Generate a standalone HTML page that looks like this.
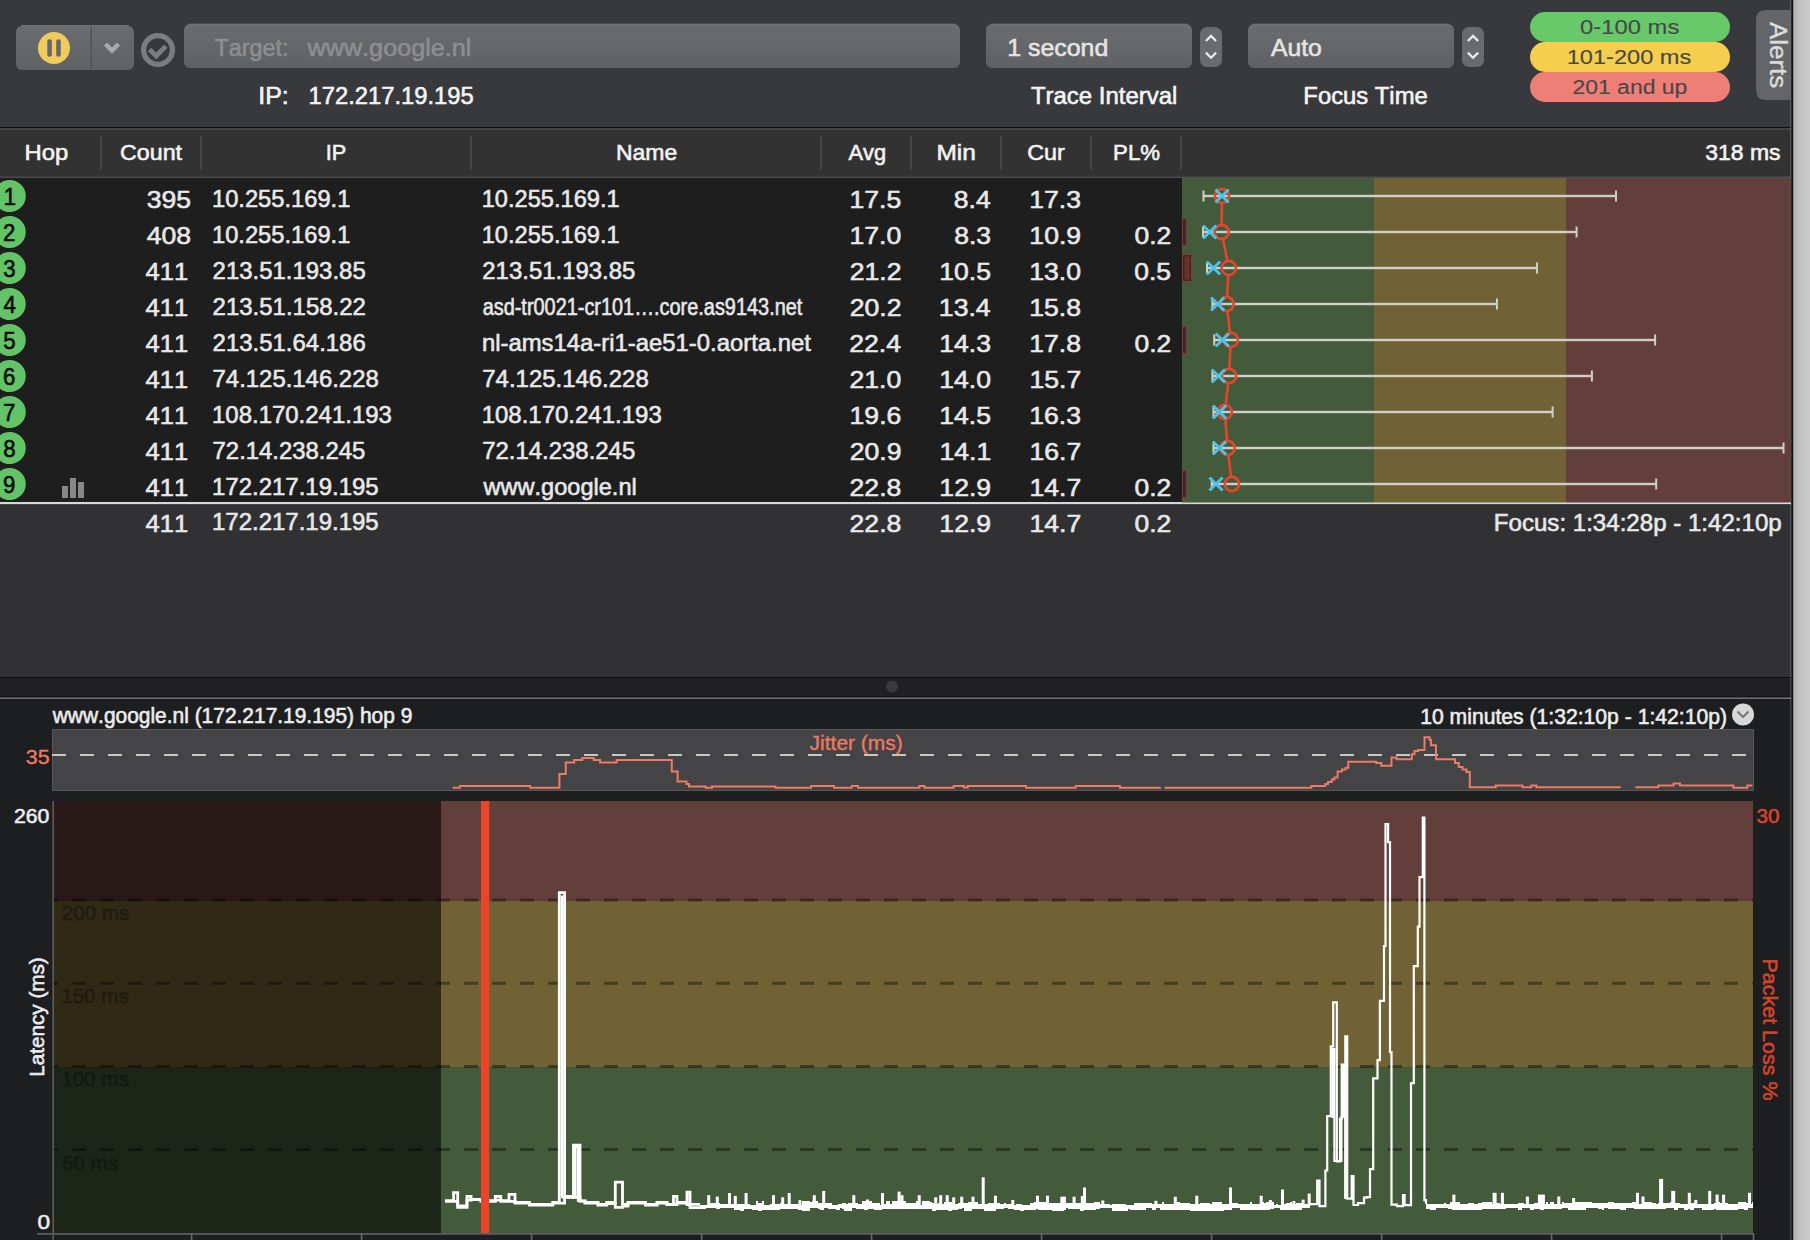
<!DOCTYPE html>
<html><head><meta charset="utf-8"><title>PingPlotter</title>
<style>
html,body{margin:0;padding:0;background:#38393c;}
body{width:1810px;height:1240px;overflow:hidden;}
svg{display:block;font-family:"Liberation Sans",sans-serif;font-kerning:none;}
text{white-space:pre;}
</style></head><body>
<svg width="1810" height="1240" viewBox="0 0 1810 1240">
<rect x="0" y="0" width="1810" height="127" fill="#38393c"/>
<rect x="0" y="127" width="1791" height="1.5" fill="#0e0e10"/>
<rect x="0" y="128.3" width="1791" height="1.5" fill="#515153"/>
<rect x="0" y="129.8" width="1791" height="46.7" fill="#323233"/>
<rect x="0" y="176.5" width="1791" height="1.5" fill="#4a4a4c"/>
<rect x="0" y="178" width="1791" height="325" fill="#1e1e1f"/>
<rect x="0" y="502" width="1791" height="2.2" fill="#d8d8d8"/>
<rect x="0" y="504.5" width="1791" height="172.5" fill="#313133"/>
<rect x="0" y="677" width="1791" height="1.5" fill="#0e0e10"/>
<rect x="0" y="678.5" width="1791" height="18" fill="#202022"/>
<circle cx="892" cy="686.5" r="6" fill="#3a3a3c"/>
<rect x="0" y="696.3" width="1791" height="1.2" fill="#0e0e10"/>
<rect x="0" y="697.5" width="1791" height="1.5" fill="#6e6e70"/>
<rect x="0" y="699" width="1791" height="541" fill="#1d1e20"/>
<defs><linearGradient id="rs" x1="0" x2="1" y1="0" y2="0"><stop offset="0" stop-color="#b0b0b0"/><stop offset="0.4" stop-color="#c2c2c2"/><stop offset="1" stop-color="#cbcbcb"/></linearGradient><linearGradient id="btn" x1="0" x2="0" y1="0" y2="1"><stop offset="0" stop-color="#6b6c6f"/><stop offset="1" stop-color="#606164"/></linearGradient></defs>
<rect x="1790" y="0" width="1.5" height="1240" fill="#fff" fill-opacity="0.16"/>
<rect x="1791.5" y="0" width="1.8" height="1240" fill="#111"/>
<rect x="1793.3" y="0" width="17" height="1240" fill="url(#rs)"/>
<rect x="16" y="26" width="118" height="44" rx="6" fill="url(#btn)"/>
<rect x="90.5" y="26" width="1.3" height="44" fill="#505154"/>
<circle cx="54" cy="48" r="16" fill="#eecb5c"/>
<rect x="47.3" y="39.2" width="4.6" height="17.6" rx="2.3" fill="#66676a"/>
<rect x="56.2" y="39.2" width="4.6" height="17.6" rx="2.3" fill="#66676a"/>
<path d="M104,45.6 L107,42.4 L112,47.4 L117,42.4 L120,45.6 L112,53.8 Z" fill="#ababab"/>
<circle cx="158" cy="50" r="14.4" fill="none" stroke="#7c7c7e" stroke-width="5.3"/>
<polyline points="149.6,49.6 156.3,56 165.8,46.2" fill="none" stroke="#7c7c7e" stroke-width="4.8"/>
<rect x="184" y="24" width="776" height="44" rx="6" fill="url(#btn)"/>
<text x="214.48" y="55.60" font-size="23.95" textLength="73.96" lengthAdjust="spacingAndGlyphs" fill="#8d8e90" stroke="#8d8e90" stroke-width="0.6" >Target:</text>
<text x="307.54" y="55.60" font-size="24.56" textLength="163.85" lengthAdjust="spacingAndGlyphs" fill="#8d8e90" stroke="#8d8e90" stroke-width="0.6" >www.google.nl</text>
<text x="258.19" y="103.60" font-size="24.39" textLength="30.59" lengthAdjust="spacingAndGlyphs" fill="#f4f4f4" stroke="#f4f4f4" stroke-width="0.6" >IP:</text>
<text x="308.49" y="103.60" font-size="24.39" textLength="165.21" lengthAdjust="spacingAndGlyphs" fill="#f4f4f4" stroke="#f4f4f4" stroke-width="0.6" >172.217.19.195</text>
<rect x="986" y="24" width="206" height="44" rx="6" fill="url(#btn)"/>
<text x="1007.20" y="55.70" font-size="24.10" textLength="101.10" lengthAdjust="spacingAndGlyphs" fill="#e4e4e4" stroke="#e4e4e4" stroke-width="0.6" >1 second</text>
<rect x="1200" y="27" width="22" height="40" rx="7" fill="#6a6b6e"/>
<polyline points="1205.9,41 1211,35.9 1216.1,41" fill="none" stroke="#ececec" stroke-width="2.2"/>
<polyline points="1205.9,52.6 1211,57.7 1216.1,52.6" fill="none" stroke="#ececec" stroke-width="2.2"/>
<text x="1030.96" y="103.70" font-size="24.39" textLength="146.34" lengthAdjust="spacingAndGlyphs" fill="#f4f4f4" stroke="#f4f4f4" stroke-width="0.6" >Trace Interval</text>
<rect x="1248" y="24" width="206" height="44" rx="6" fill="url(#btn)"/>
<text x="1271.05" y="55.70" font-size="24.10" textLength="50.68" lengthAdjust="spacingAndGlyphs" fill="#e4e4e4" stroke="#e4e4e4" stroke-width="0.6" >Auto</text>
<rect x="1462" y="27" width="22" height="40" rx="7" fill="#6a6b6e"/>
<polyline points="1467.9,41 1473,35.9 1478.1,41" fill="none" stroke="#ececec" stroke-width="2.2"/>
<polyline points="1467.9,52.6 1473,57.7 1478.1,52.6" fill="none" stroke="#ececec" stroke-width="2.2"/>
<text x="1303.35" y="103.70" font-size="24.39" textLength="124.41" lengthAdjust="spacingAndGlyphs" fill="#f4f4f4" stroke="#f4f4f4" stroke-width="0.6" >Focus Time</text>
<rect x="21" y="25" width="108" height="1" fill="#7b7c7f" fill-opacity="0.8"/>
<rect x="189" y="23.6" width="766" height="1" fill="#7b7c7f" fill-opacity="0.8"/>
<rect x="991" y="23.6" width="196" height="1" fill="#7b7c7f" fill-opacity="0.8"/>
<rect x="1253" y="23.6" width="196" height="1" fill="#7b7c7f" fill-opacity="0.8"/>
<rect x="1530" y="72" width="200" height="30" rx="15" fill="#ee7e76"/>
<rect x="1530" y="42" width="200" height="30" rx="15" fill="#f4ce4c"/>
<rect x="1530" y="12" width="200" height="30" rx="15" fill="#67c96a"/>
<text x="1580.13" y="33.70" font-size="20.52" textLength="99.17" lengthAdjust="spacingAndGlyphs" fill="#474747" stroke="#474747" stroke-width="0.12" >0-100 ms</text>
<text x="1566.76" y="63.60" font-size="20.52" textLength="124.53" lengthAdjust="spacingAndGlyphs" fill="#474747" stroke="#474747" stroke-width="0.12" >101-200 ms</text>
<text x="1572.40" y="93.50" font-size="20.52" textLength="115.00" lengthAdjust="spacingAndGlyphs" fill="#474747" stroke="#474747" stroke-width="0.12" >201 and up</text>
<path d="M1791,10 L1766,10 Q1756,10 1756,20 L1756,90 Q1756,100 1766,100 L1791,100 Z" fill="#646568"/>
<g transform="translate(1770,21.8) rotate(90)">
<text x="0.15" y="0.00" font-size="23.58" textLength="66.29" lengthAdjust="spacingAndGlyphs" fill="#dcdcdc" stroke="#dcdcdc" stroke-width="0.4" >Alerts</text>
</g>
<rect x="100.3" y="136.5" width="1.4" height="33" fill="#505052"/>
<rect x="200.3" y="136.5" width="1.4" height="33" fill="#505052"/>
<rect x="470.3" y="136.5" width="1.4" height="33" fill="#505052"/>
<rect x="820.3" y="136.5" width="1.4" height="33" fill="#505052"/>
<rect x="910.3" y="136.5" width="1.4" height="33" fill="#505052"/>
<rect x="1000.3" y="136.5" width="1.4" height="33" fill="#505052"/>
<rect x="1090.3" y="136.5" width="1.4" height="33" fill="#505052"/>
<rect x="1180.3" y="136.5" width="1.4" height="33" fill="#505052"/>
<text x="24.54" y="160.20" font-size="22.94" textLength="43.76" lengthAdjust="spacingAndGlyphs" fill="#f2f2f2" stroke="#f2f2f2" stroke-width="0.6" >Hop</text>
<text x="120.12" y="160.20" font-size="22.94" textLength="61.95" lengthAdjust="spacingAndGlyphs" fill="#f2f2f2" stroke="#f2f2f2" stroke-width="0.6" >Count</text>
<text x="325.79" y="160.20" font-size="22.94" textLength="20.55" lengthAdjust="spacingAndGlyphs" fill="#f2f2f2" stroke="#f2f2f2" stroke-width="0.6" >IP</text>
<text x="615.91" y="160.20" font-size="22.94" textLength="61.31" lengthAdjust="spacingAndGlyphs" fill="#f2f2f2" stroke="#f2f2f2" stroke-width="0.6" >Name</text>
<text x="848.46" y="160.20" font-size="22.94" textLength="37.65" lengthAdjust="spacingAndGlyphs" fill="#f2f2f2" stroke="#f2f2f2" stroke-width="0.6" >Avg</text>
<text x="936.49" y="160.20" font-size="22.94" textLength="39.39" lengthAdjust="spacingAndGlyphs" fill="#f2f2f2" stroke="#f2f2f2" stroke-width="0.6" >Min</text>
<text x="1027.32" y="160.20" font-size="22.94" textLength="37.47" lengthAdjust="spacingAndGlyphs" fill="#f2f2f2" stroke="#f2f2f2" stroke-width="0.6" >Cur</text>
<text x="1113.08" y="160.20" font-size="22.94" textLength="46.91" lengthAdjust="spacingAndGlyphs" fill="#f2f2f2" stroke="#f2f2f2" stroke-width="0.6" >PL%</text>
<text x="1705.23" y="160.20" font-size="22.94" textLength="75.30" lengthAdjust="spacingAndGlyphs" fill="#f2f2f2" stroke="#f2f2f2" stroke-width="0.6" >318 ms</text>
<rect x="1182" y="178" width="192" height="324.5" fill="#435b3b"/>
<rect x="1374" y="178" width="192" height="324.5" fill="#706234"/>
<rect x="1566" y="178" width="225" height="324.5" fill="#633f3c"/>
<circle cx="9.8" cy="196" r="16" fill="#62c466"/>
<text x="3.81" y="205.00" font-size="23.55" textLength="12.32" lengthAdjust="spacingAndGlyphs" fill="#0a0a0a" stroke="#0a0a0a" stroke-width="0.6" >1</text>
<text x="146.71" y="207.90" font-size="24.71" textLength="44.31" lengthAdjust="spacingAndGlyphs" fill="#e8e8e8" stroke="#e8e8e8" stroke-width="0.6" >395</text>
<text x="211.99" y="206.60" font-size="24.10" textLength="138.36" lengthAdjust="spacingAndGlyphs" fill="#e8e8e8" stroke="#e8e8e8" stroke-width="0.6" >10.255.169.1</text>
<text x="481.70" y="206.60" font-size="24.10" textLength="137.95" lengthAdjust="spacingAndGlyphs" fill="#e8e8e8" stroke="#e8e8e8" stroke-width="0.6" >10.255.169.1</text>
<text x="849.54" y="207.90" font-size="24.71" textLength="51.78" lengthAdjust="spacingAndGlyphs" fill="#e8e8e8" stroke="#e8e8e8" stroke-width="0.6" >17.5</text>
<text x="953.87" y="207.90" font-size="24.71" textLength="36.81" lengthAdjust="spacingAndGlyphs" fill="#e8e8e8" stroke="#e8e8e8" stroke-width="0.6" >8.4</text>
<text x="1029.29" y="207.90" font-size="24.71" textLength="51.78" lengthAdjust="spacingAndGlyphs" fill="#e8e8e8" stroke="#e8e8e8" stroke-width="0.6" >17.3</text>
<circle cx="9.8" cy="232" r="16" fill="#62c466"/>
<text x="2.98" y="241.00" font-size="23.55" textLength="12.36" lengthAdjust="spacingAndGlyphs" fill="#0a0a0a" stroke="#0a0a0a" stroke-width="0.6" >2</text>
<text x="146.74" y="243.90" font-size="24.71" textLength="44.31" lengthAdjust="spacingAndGlyphs" fill="#e8e8e8" stroke="#e8e8e8" stroke-width="0.6" >408</text>
<text x="211.99" y="242.60" font-size="24.10" textLength="138.36" lengthAdjust="spacingAndGlyphs" fill="#e8e8e8" stroke="#e8e8e8" stroke-width="0.6" >10.255.169.1</text>
<text x="481.70" y="242.60" font-size="24.10" textLength="137.95" lengthAdjust="spacingAndGlyphs" fill="#e8e8e8" stroke="#e8e8e8" stroke-width="0.6" >10.255.169.1</text>
<text x="849.46" y="243.90" font-size="24.71" textLength="51.78" lengthAdjust="spacingAndGlyphs" fill="#e8e8e8" stroke="#e8e8e8" stroke-width="0.6" >17.0</text>
<text x="954.26" y="243.90" font-size="24.71" textLength="36.80" lengthAdjust="spacingAndGlyphs" fill="#e8e8e8" stroke="#e8e8e8" stroke-width="0.6" >8.3</text>
<text x="1029.38" y="243.90" font-size="24.71" textLength="51.78" lengthAdjust="spacingAndGlyphs" fill="#e8e8e8" stroke="#e8e8e8" stroke-width="0.6" >10.9</text>
<text x="1134.43" y="243.90" font-size="24.71" textLength="36.80" lengthAdjust="spacingAndGlyphs" fill="#e8e8e8" stroke="#e8e8e8" stroke-width="0.6" >0.2</text>
<circle cx="9.8" cy="268" r="16" fill="#62c466"/>
<text x="3.25" y="277.00" font-size="23.55" textLength="12.39" lengthAdjust="spacingAndGlyphs" fill="#0a0a0a" stroke="#0a0a0a" stroke-width="0.6" >3</text>
<text x="145.51" y="279.90" font-size="24.10" textLength="42.63" lengthAdjust="spacingAndGlyphs" fill="#e8e8e8" stroke="#e8e8e8" stroke-width="0.6" >411</text>
<text x="212.60" y="278.60" font-size="24.10" textLength="153.11" lengthAdjust="spacingAndGlyphs" fill="#e8e8e8" stroke="#e8e8e8" stroke-width="0.6" >213.51.193.85</text>
<text x="482.30" y="278.60" font-size="24.10" textLength="153.11" lengthAdjust="spacingAndGlyphs" fill="#e8e8e8" stroke="#e8e8e8" stroke-width="0.6" >213.51.193.85</text>
<text x="849.75" y="279.90" font-size="24.71" textLength="51.79" lengthAdjust="spacingAndGlyphs" fill="#e8e8e8" stroke="#e8e8e8" stroke-width="0.6" >21.2</text>
<text x="939.24" y="279.90" font-size="24.71" textLength="51.78" lengthAdjust="spacingAndGlyphs" fill="#e8e8e8" stroke="#e8e8e8" stroke-width="0.6" >10.5</text>
<text x="1029.16" y="279.90" font-size="24.71" textLength="51.78" lengthAdjust="spacingAndGlyphs" fill="#e8e8e8" stroke="#e8e8e8" stroke-width="0.6" >13.0</text>
<text x="1134.21" y="279.90" font-size="24.71" textLength="36.80" lengthAdjust="spacingAndGlyphs" fill="#e8e8e8" stroke="#e8e8e8" stroke-width="0.6" >0.5</text>
<circle cx="9.8" cy="304" r="16" fill="#62c466"/>
<text x="3.59" y="313.00" font-size="23.55" textLength="12.43" lengthAdjust="spacingAndGlyphs" fill="#0a0a0a" stroke="#0a0a0a" stroke-width="0.6" >4</text>
<text x="145.51" y="315.90" font-size="24.10" textLength="42.63" lengthAdjust="spacingAndGlyphs" fill="#e8e8e8" stroke="#e8e8e8" stroke-width="0.6" >411</text>
<text x="212.59" y="314.60" font-size="24.10" textLength="153.31" lengthAdjust="spacingAndGlyphs" fill="#e8e8e8" stroke="#e8e8e8" stroke-width="0.6" >213.51.158.22</text>
<text x="482.65" y="314.60" font-size="24.10" textLength="319.69" lengthAdjust="spacingAndGlyphs" fill="#e8e8e8" stroke="#e8e8e8" stroke-width="0.6" >asd-tr0021-cr101….core.as9143.net</text>
<text x="849.75" y="315.90" font-size="24.71" textLength="51.79" lengthAdjust="spacingAndGlyphs" fill="#e8e8e8" stroke="#e8e8e8" stroke-width="0.6" >20.2</text>
<text x="938.89" y="315.90" font-size="24.71" textLength="51.79" lengthAdjust="spacingAndGlyphs" fill="#e8e8e8" stroke="#e8e8e8" stroke-width="0.6" >13.4</text>
<text x="1029.27" y="315.90" font-size="24.71" textLength="51.78" lengthAdjust="spacingAndGlyphs" fill="#e8e8e8" stroke="#e8e8e8" stroke-width="0.6" >15.8</text>
<circle cx="9.8" cy="340" r="16" fill="#62c466"/>
<text x="3.21" y="349.00" font-size="23.55" textLength="12.39" lengthAdjust="spacingAndGlyphs" fill="#0a0a0a" stroke="#0a0a0a" stroke-width="0.6" >5</text>
<text x="145.51" y="351.90" font-size="24.10" textLength="42.63" lengthAdjust="spacingAndGlyphs" fill="#e8e8e8" stroke="#e8e8e8" stroke-width="0.6" >411</text>
<text x="212.60" y="350.60" font-size="24.10" textLength="153.16" lengthAdjust="spacingAndGlyphs" fill="#e8e8e8" stroke="#e8e8e8" stroke-width="0.6" >213.51.64.186</text>
<text x="481.92" y="350.60" font-size="24.10" textLength="328.96" lengthAdjust="spacingAndGlyphs" fill="#e8e8e8" stroke="#e8e8e8" stroke-width="0.6" >nl-ams14a-ri1-ae51-0.aorta.net</text>
<text x="849.18" y="351.90" font-size="24.71" textLength="51.79" lengthAdjust="spacingAndGlyphs" fill="#e8e8e8" stroke="#e8e8e8" stroke-width="0.6" >22.4</text>
<text x="939.29" y="351.90" font-size="24.71" textLength="51.78" lengthAdjust="spacingAndGlyphs" fill="#e8e8e8" stroke="#e8e8e8" stroke-width="0.6" >14.3</text>
<text x="1029.27" y="351.90" font-size="24.71" textLength="51.78" lengthAdjust="spacingAndGlyphs" fill="#e8e8e8" stroke="#e8e8e8" stroke-width="0.6" >17.8</text>
<text x="1134.43" y="351.90" font-size="24.71" textLength="36.80" lengthAdjust="spacingAndGlyphs" fill="#e8e8e8" stroke="#e8e8e8" stroke-width="0.6" >0.2</text>
<circle cx="9.8" cy="376" r="16" fill="#62c466"/>
<text x="2.97" y="385.00" font-size="23.55" textLength="12.37" lengthAdjust="spacingAndGlyphs" fill="#0a0a0a" stroke="#0a0a0a" stroke-width="0.6" >6</text>
<text x="145.51" y="387.90" font-size="24.10" textLength="42.63" lengthAdjust="spacingAndGlyphs" fill="#e8e8e8" stroke="#e8e8e8" stroke-width="0.6" >411</text>
<text x="212.57" y="386.60" font-size="24.10" textLength="166.16" lengthAdjust="spacingAndGlyphs" fill="#e8e8e8" stroke="#e8e8e8" stroke-width="0.6" >74.125.146.228</text>
<text x="482.27" y="386.60" font-size="24.10" textLength="166.47" lengthAdjust="spacingAndGlyphs" fill="#e8e8e8" stroke="#e8e8e8" stroke-width="0.6" >74.125.146.228</text>
<text x="849.45" y="387.90" font-size="24.71" textLength="51.79" lengthAdjust="spacingAndGlyphs" fill="#e8e8e8" stroke="#e8e8e8" stroke-width="0.6" >21.0</text>
<text x="939.16" y="387.90" font-size="24.71" textLength="51.78" lengthAdjust="spacingAndGlyphs" fill="#e8e8e8" stroke="#e8e8e8" stroke-width="0.6" >14.0</text>
<text x="1029.46" y="387.90" font-size="24.71" textLength="51.78" lengthAdjust="spacingAndGlyphs" fill="#e8e8e8" stroke="#e8e8e8" stroke-width="0.6" >15.7</text>
<circle cx="9.8" cy="412" r="16" fill="#62c466"/>
<text x="2.96" y="421.00" font-size="23.55" textLength="12.36" lengthAdjust="spacingAndGlyphs" fill="#0a0a0a" stroke="#0a0a0a" stroke-width="0.6" >7</text>
<text x="145.51" y="423.90" font-size="24.10" textLength="42.63" lengthAdjust="spacingAndGlyphs" fill="#e8e8e8" stroke="#e8e8e8" stroke-width="0.6" >411</text>
<text x="211.97" y="422.60" font-size="24.10" textLength="179.98" lengthAdjust="spacingAndGlyphs" fill="#e8e8e8" stroke="#e8e8e8" stroke-width="0.6" >108.170.241.193</text>
<text x="481.67" y="422.60" font-size="24.10" textLength="180.08" lengthAdjust="spacingAndGlyphs" fill="#e8e8e8" stroke="#e8e8e8" stroke-width="0.6" >108.170.241.193</text>
<text x="849.59" y="423.90" font-size="24.71" textLength="51.78" lengthAdjust="spacingAndGlyphs" fill="#e8e8e8" stroke="#e8e8e8" stroke-width="0.6" >19.6</text>
<text x="939.24" y="423.90" font-size="24.71" textLength="51.78" lengthAdjust="spacingAndGlyphs" fill="#e8e8e8" stroke="#e8e8e8" stroke-width="0.6" >14.5</text>
<text x="1029.29" y="423.90" font-size="24.71" textLength="51.78" lengthAdjust="spacingAndGlyphs" fill="#e8e8e8" stroke="#e8e8e8" stroke-width="0.6" >16.3</text>
<circle cx="9.8" cy="448" r="16" fill="#62c466"/>
<text x="3.13" y="457.00" font-size="23.55" textLength="12.38" lengthAdjust="spacingAndGlyphs" fill="#0a0a0a" stroke="#0a0a0a" stroke-width="0.6" >8</text>
<text x="145.51" y="459.90" font-size="24.10" textLength="42.63" lengthAdjust="spacingAndGlyphs" fill="#e8e8e8" stroke="#e8e8e8" stroke-width="0.6" >411</text>
<text x="212.58" y="458.60" font-size="24.10" textLength="152.73" lengthAdjust="spacingAndGlyphs" fill="#e8e8e8" stroke="#e8e8e8" stroke-width="0.6" >72.14.238.245</text>
<text x="482.27" y="458.60" font-size="24.10" textLength="152.93" lengthAdjust="spacingAndGlyphs" fill="#e8e8e8" stroke="#e8e8e8" stroke-width="0.6" >72.14.238.245</text>
<text x="849.67" y="459.90" font-size="24.71" textLength="51.79" lengthAdjust="spacingAndGlyphs" fill="#e8e8e8" stroke="#e8e8e8" stroke-width="0.6" >20.9</text>
<text x="939.42" y="459.90" font-size="24.71" textLength="51.78" lengthAdjust="spacingAndGlyphs" fill="#e8e8e8" stroke="#e8e8e8" stroke-width="0.6" >14.1</text>
<text x="1029.46" y="459.90" font-size="24.71" textLength="51.78" lengthAdjust="spacingAndGlyphs" fill="#e8e8e8" stroke="#e8e8e8" stroke-width="0.6" >16.7</text>
<circle cx="9.8" cy="484" r="16" fill="#62c466"/>
<text x="3.06" y="493.00" font-size="23.55" textLength="12.37" lengthAdjust="spacingAndGlyphs" fill="#0a0a0a" stroke="#0a0a0a" stroke-width="0.6" >9</text>
<text x="145.51" y="495.90" font-size="24.10" textLength="42.63" lengthAdjust="spacingAndGlyphs" fill="#e8e8e8" stroke="#e8e8e8" stroke-width="0.6" >411</text>
<text x="211.97" y="494.60" font-size="24.10" textLength="166.73" lengthAdjust="spacingAndGlyphs" fill="#e8e8e8" stroke="#e8e8e8" stroke-width="0.6" >172.217.19.195</text>
<text x="483.53" y="494.60" font-size="24.10" textLength="153.24" lengthAdjust="spacingAndGlyphs" fill="#e8e8e8" stroke="#e8e8e8" stroke-width="0.6" >www.google.nl</text>
<text x="849.57" y="495.90" font-size="24.71" textLength="51.79" lengthAdjust="spacingAndGlyphs" fill="#e8e8e8" stroke="#e8e8e8" stroke-width="0.6" >22.8</text>
<text x="939.38" y="495.90" font-size="24.71" textLength="51.78" lengthAdjust="spacingAndGlyphs" fill="#e8e8e8" stroke="#e8e8e8" stroke-width="0.6" >12.9</text>
<text x="1029.46" y="495.90" font-size="24.71" textLength="51.78" lengthAdjust="spacingAndGlyphs" fill="#e8e8e8" stroke="#e8e8e8" stroke-width="0.6" >14.7</text>
<text x="1134.43" y="495.90" font-size="24.71" textLength="36.80" lengthAdjust="spacingAndGlyphs" fill="#e8e8e8" stroke="#e8e8e8" stroke-width="0.6" >0.2</text>
<text x="145.51" y="531.50" font-size="24.10" textLength="42.63" lengthAdjust="spacingAndGlyphs" fill="#e8e8e8" stroke="#e8e8e8" stroke-width="0.6" >411</text>
<text x="211.97" y="530.30" font-size="24.10" textLength="166.73" lengthAdjust="spacingAndGlyphs" fill="#e8e8e8" stroke="#e8e8e8" stroke-width="0.6" >172.217.19.195</text>
<text x="849.57" y="531.50" font-size="24.71" textLength="51.79" lengthAdjust="spacingAndGlyphs" fill="#e8e8e8" stroke="#e8e8e8" stroke-width="0.6" >22.8</text>
<text x="939.38" y="531.50" font-size="24.71" textLength="51.78" lengthAdjust="spacingAndGlyphs" fill="#e8e8e8" stroke="#e8e8e8" stroke-width="0.6" >12.9</text>
<text x="1029.46" y="531.50" font-size="24.71" textLength="51.78" lengthAdjust="spacingAndGlyphs" fill="#e8e8e8" stroke="#e8e8e8" stroke-width="0.6" >14.7</text>
<text x="1134.43" y="531.50" font-size="24.71" textLength="36.80" lengthAdjust="spacingAndGlyphs" fill="#e8e8e8" stroke="#e8e8e8" stroke-width="0.6" >0.2</text>
<text x="1493.82" y="530.60" font-size="24.39" textLength="287.89" lengthAdjust="spacingAndGlyphs" fill="#e8e8e8" stroke="#e8e8e8" stroke-width="0.6" >Focus: 1:34:28p - 1:42:10p</text>
<rect x="1182.5" y="218.5" width="4" height="27" fill="#3b2a2a" stroke="#8a3631" stroke-width="1"/>
<rect x="1182.5" y="254.5" width="9" height="27" fill="#3b2a2a" stroke="#8a3631" stroke-width="1"/>
<rect x="1184.5" y="256.5" width="5" height="23" fill="#6d2f2b"/>
<rect x="1182.5" y="326.5" width="4" height="27" fill="#3b2a2a" stroke="#8a3631" stroke-width="1"/>
<rect x="1182.5" y="470.5" width="4" height="27" fill="#3b2a2a" stroke="#8a3631" stroke-width="1"/>
<rect x="1203.5" y="194.8" width="412.5" height="2.4" fill="#cfcfc8"/>
<rect x="1202.5" y="190.5" width="2" height="11" fill="#cfcfc8"/>
<rect x="1615" y="190.5" width="2" height="11" fill="#cfcfc8"/>
<rect x="1203" y="230.8" width="373.5999999999999" height="2.4" fill="#cfcfc8"/>
<rect x="1202" y="226.5" width="2" height="11" fill="#cfcfc8"/>
<rect x="1575.6" y="226.5" width="2" height="11" fill="#cfcfc8"/>
<rect x="1207" y="266.8" width="330" height="2.4" fill="#cfcfc8"/>
<rect x="1206" y="262.5" width="2" height="11" fill="#cfcfc8"/>
<rect x="1536" y="262.5" width="2" height="11" fill="#cfcfc8"/>
<rect x="1212.4" y="302.8" width="284.5999999999999" height="2.4" fill="#cfcfc8"/>
<rect x="1211.4" y="298.5" width="2" height="11" fill="#cfcfc8"/>
<rect x="1496" y="298.5" width="2" height="11" fill="#cfcfc8"/>
<rect x="1214.2" y="338.8" width="440.89999999999986" height="2.4" fill="#cfcfc8"/>
<rect x="1213.2" y="334.5" width="2" height="11" fill="#cfcfc8"/>
<rect x="1654.1" y="334.5" width="2" height="11" fill="#cfcfc8"/>
<rect x="1212.4" y="374.8" width="379.5" height="2.4" fill="#cfcfc8"/>
<rect x="1211.4" y="370.5" width="2" height="11" fill="#cfcfc8"/>
<rect x="1590.9" y="370.5" width="2" height="11" fill="#cfcfc8"/>
<rect x="1213.5" y="410.8" width="339.0999999999999" height="2.4" fill="#cfcfc8"/>
<rect x="1212.5" y="406.5" width="2" height="11" fill="#cfcfc8"/>
<rect x="1551.6" y="406.5" width="2" height="11" fill="#cfcfc8"/>
<rect x="1213.5" y="446.8" width="570.0" height="2.4" fill="#cfcfc8"/>
<rect x="1212.5" y="442.5" width="2" height="11" fill="#cfcfc8"/>
<rect x="1782.5" y="442.5" width="2" height="11" fill="#cfcfc8"/>
<rect x="1211.7" y="482.8" width="444.5" height="2.4" fill="#cfcfc8"/>
<rect x="1210.7" y="478.5" width="2" height="11" fill="#cfcfc8"/>
<rect x="1655.2" y="478.5" width="2" height="11" fill="#cfcfc8"/>
<line x1="1221.92" y1="203.60" x2="1221.68" y2="224.40" stroke="#e5452b" stroke-width="2.6"/>
<line x1="1223.09" y1="239.45" x2="1227.31" y2="260.55" stroke="#e5452b" stroke-width="2.6"/>
<line x1="1228.34" y1="275.59" x2="1227.06" y2="296.41" stroke="#e5452b" stroke-width="2.6"/>
<line x1="1227.48" y1="311.55" x2="1229.92" y2="332.45" stroke="#e5452b" stroke-width="2.6"/>
<line x1="1230.42" y1="347.59" x2="1229.38" y2="368.41" stroke="#e5452b" stroke-width="2.6"/>
<line x1="1228.12" y1="383.55" x2="1225.68" y2="404.45" stroke="#e5452b" stroke-width="2.6"/>
<line x1="1225.39" y1="419.58" x2="1227.01" y2="440.42" stroke="#e5452b" stroke-width="2.6"/>
<line x1="1228.50" y1="455.55" x2="1231.00" y2="476.45" stroke="#e5452b" stroke-width="2.6"/>
<circle cx="1222" cy="196" r="7.1" fill="none" stroke="#e5452b" stroke-width="2.6"/>
<circle cx="1221.6" cy="232" r="7.1" fill="none" stroke="#e5452b" stroke-width="2.6"/>
<circle cx="1228.8" cy="268" r="7.1" fill="none" stroke="#e5452b" stroke-width="2.6"/>
<circle cx="1226.6" cy="304" r="7.1" fill="none" stroke="#e5452b" stroke-width="2.6"/>
<circle cx="1230.8" cy="340" r="7.1" fill="none" stroke="#e5452b" stroke-width="2.6"/>
<circle cx="1229" cy="376" r="7.1" fill="none" stroke="#e5452b" stroke-width="2.6"/>
<circle cx="1224.8" cy="412" r="7.1" fill="none" stroke="#e5452b" stroke-width="2.6"/>
<circle cx="1227.6" cy="448" r="7.1" fill="none" stroke="#e5452b" stroke-width="2.6"/>
<circle cx="1231.9" cy="484" r="7.1" fill="none" stroke="#e5452b" stroke-width="2.6"/>
<path d="M1215.4,189.4 L1228.6,202.6 M1215.4,202.6 L1228.6,189.4" stroke="#4cc3ea" stroke-width="2.8"/>
<path d="M1203.1000000000001,225.4 L1216.3,238.6 M1203.1000000000001,238.6 L1216.3,225.4" stroke="#4cc3ea" stroke-width="2.8"/>
<path d="M1206.9,261.4 L1220.1,274.6 M1206.9,274.6 L1220.1,261.4" stroke="#4cc3ea" stroke-width="2.8"/>
<path d="M1211.1000000000001,297.4 L1224.3,310.6 M1211.1000000000001,310.6 L1224.3,297.4" stroke="#4cc3ea" stroke-width="2.8"/>
<path d="M1215.7,333.4 L1228.8999999999999,346.6 M1215.7,346.6 L1228.8999999999999,333.4" stroke="#4cc3ea" stroke-width="2.8"/>
<path d="M1211.8000000000002,369.4 L1225.0,382.6 M1211.8000000000002,382.6 L1225.0,369.4" stroke="#4cc3ea" stroke-width="2.8"/>
<path d="M1212.9,405.4 L1226.1,418.6 M1212.9,418.6 L1226.1,405.4" stroke="#4cc3ea" stroke-width="2.8"/>
<path d="M1212.9,441.4 L1226.1,454.6 M1212.9,454.6 L1226.1,441.4" stroke="#4cc3ea" stroke-width="2.8"/>
<path d="M1209.4,477.4 L1222.6,490.6 M1209.4,490.6 L1222.6,477.4" stroke="#4cc3ea" stroke-width="2.8"/>
<rect x="62" y="486" width="6" height="12" fill="#878787"/>
<rect x="70" y="478" width="6" height="20" fill="#878787"/>
<rect x="78" y="482" width="6" height="16" fill="#878787"/>
<text x="52.73" y="723.20" font-size="21.92" textLength="359.56" lengthAdjust="spacingAndGlyphs" fill="#ececec" stroke="#ececec" stroke-width="0.6" >www.google.nl (172.217.19.195) hop 9</text>
<text x="1420.19" y="723.60" font-size="21.92" textLength="306.82" lengthAdjust="spacingAndGlyphs" fill="#ececec" stroke="#ececec" stroke-width="0.6" >10 minutes (1:32:10p - 1:42:10p)</text>
<circle cx="1743" cy="714.5" r="11" fill="#d8d8d8"/>
<polyline points="1737.5,711.5 1743,717 1748.5,711.5" fill="none" stroke="#7a7a7a" stroke-width="2.2"/>
<rect x="52.5" y="729.5" width="1701" height="61" fill="#444446" stroke="#58585a" stroke-width="1"/>
<line x1="52" y1="755" x2="1752" y2="755" stroke="#c8c8c0" stroke-width="2" stroke-dasharray="14 14"/>
<text x="809.62" y="750.30" font-size="20.77" textLength="93.13" lengthAdjust="spacingAndGlyphs" fill="#f07a62" stroke="#f07a62" stroke-width="0.3" >Jitter (ms)</text>
<text x="25.83" y="763.60" font-size="20.33" textLength="23.81" lengthAdjust="spacingAndGlyphs" fill="#f27a62" stroke="#f27a62" stroke-width="0.3" >35</text>
<rect x="53" y="801" width="1700" height="99.80769230769226" fill="#633f3c"/>
<rect x="53" y="900.8076923076923" width="1700" height="166.34615384615392" fill="#706234"/>
<rect x="53" y="1067.1538461538462" width="1700" height="166.3461538461538" fill="#435b3b"/>
<rect x="53" y="801" width="388" height="432.5" fill="#000" fill-opacity="0.58"/>
<line x1="53" y1="900.1" x2="1753" y2="900.1" stroke="#000" stroke-opacity="0.38" stroke-width="3" stroke-dasharray="14 14" stroke-dashoffset="9"/>
<text x="61.76" y="920.11" font-size="20.17" textLength="67.54" lengthAdjust="spacingAndGlyphs" fill="#000" stroke="#000" stroke-width="0.6" opacity="0.3">200 ms</text>
<line x1="53" y1="983.3" x2="1753" y2="983.3" stroke="#000" stroke-opacity="0.38" stroke-width="3" stroke-dasharray="14 14" stroke-dashoffset="9"/>
<text x="61.23" y="1003.28" font-size="20.17" textLength="67.54" lengthAdjust="spacingAndGlyphs" fill="#000" stroke="#000" stroke-width="0.6" opacity="0.3">150 ms</text>
<line x1="53" y1="1066.5" x2="1753" y2="1066.5" stroke="#000" stroke-opacity="0.38" stroke-width="3" stroke-dasharray="14 14" stroke-dashoffset="9"/>
<text x="61.23" y="1086.45" font-size="20.17" textLength="67.54" lengthAdjust="spacingAndGlyphs" fill="#000" stroke="#000" stroke-width="0.6" opacity="0.3">100 ms</text>
<line x1="53" y1="1149.6" x2="1753" y2="1149.6" stroke="#000" stroke-opacity="0.38" stroke-width="3" stroke-dasharray="14 14" stroke-dashoffset="9"/>
<text x="61.98" y="1169.63" font-size="20.17" textLength="55.98" lengthAdjust="spacingAndGlyphs" fill="#000" stroke="#000" stroke-width="0.6" opacity="0.3">50 ms</text>
<rect x="52.5" y="801" width="1.3" height="439" fill="#6a6a6c"/>
<rect x="37" y="1233" width="1717" height="1.8" fill="#5d5d60"/>
<rect x="190.79999999999998" y="1233" width="1.6" height="7" fill="#6a6a6c"/>
<rect x="360.8" y="1233" width="1.6" height="7" fill="#6a6a6c"/>
<rect x="530.8000000000001" y="1233" width="1.6" height="7" fill="#6a6a6c"/>
<rect x="700.8000000000001" y="1233" width="1.6" height="7" fill="#6a6a6c"/>
<rect x="870.8000000000001" y="1233" width="1.6" height="7" fill="#6a6a6c"/>
<rect x="1040.8" y="1233" width="1.6" height="7" fill="#6a6a6c"/>
<rect x="1210.8" y="1233" width="1.6" height="7" fill="#6a6a6c"/>
<rect x="1380.8" y="1233" width="1.6" height="7" fill="#6a6a6c"/>
<rect x="1550.8" y="1233" width="1.6" height="7" fill="#6a6a6c"/>
<rect x="1720.8" y="1233" width="1.6" height="7" fill="#6a6a6c"/>
<rect x="1752.7" y="1233" width="1.6" height="7" fill="#6a6a6c"/>
<text x="14.03" y="822.50" font-size="20.47" textLength="35.40" lengthAdjust="spacingAndGlyphs" fill="#ececec" stroke="#ececec" stroke-width="0.6" >260</text>
<text x="37.62" y="1228.60" font-size="20.47" textLength="12.57" lengthAdjust="spacingAndGlyphs" fill="#ececec" stroke="#ececec" stroke-width="0.6" >0</text>
<text x="1756.51" y="822.50" font-size="20.47" textLength="22.99" lengthAdjust="spacingAndGlyphs" fill="#d6432a" stroke="#d6432a" stroke-width="0.6" >30</text>
<g transform="translate(43.6,1075.3) rotate(-90)">
<text x="-1.39" y="0.00" font-size="20.90" textLength="119.38" lengthAdjust="spacingAndGlyphs" fill="#ececec" stroke="#ececec" stroke-width="0.6" >Latency (ms)</text>
</g>
<g transform="translate(1763,960) rotate(90)">
<text x="-1.46" y="0.00" font-size="20.90" textLength="141.93" lengthAdjust="spacingAndGlyphs" fill="#d6432a" stroke="#d6432a" stroke-width="0.6" >Packet Loss %</text>
</g>
<polyline points="452.7,787.8 459.8,787.8 459.8,786 530.2,786 530.2,787.8 559.4,787.8 559.4,774 565.8,774 565.8,762.4 574.2,762.4 574.2,760 582.3,760 582.3,758 593.7,758 593.7,760 600.1,760 600.1,762.4 616.6,762.4 616.6,760 671.8,760 671.8,771.5 677.6,771.5 677.6,781.4 686.5,781.4 686.5,784 689,784 689,786.5 705.6,786.5 705.6,787.8 712,787.8 712,786.5 775.5,786.5 775.5,787.8 811,787.8 811,786 834,786 834,787.8 851.7,787.8 851.7,786 858,786 858,787.8 919.4,787.8 919.4,786 924.5,786 924.5,787.8 953.7,787.8 953.7,786 963.9,786 963.9,787.5 967.7,787.5 967.7,786 1026,786 1026,787.8 1075.7,787.8 1075.7,786 1120,786 1120,787.8 1160.8,787.8" fill="none" stroke="#ee7b63" stroke-width="2"/>
<polyline points="1164.6,787.8 1311.4,787.8 1311.4,786 1325.4,786 1325.4,784 1328,784 1328,782 1331.8,782 1331.8,779.6 1334.3,779.6 1334.3,777.6 1337.6,777.6 1337.6,771.5 1342,771.5 1342,769.5 1345.7,769.5 1345.7,767.7 1348.3,767.7 1348.3,761.8 1376.2,761.8 1376.2,763 1381.3,763 1381.3,765.7 1391.5,765.7 1391.5,757.5 1396.6,757.5 1396.6,759.3 1411.8,759.3 1411.8,754.2 1414.4,754.2 1414.4,751 1418.2,751 1418.2,750 1424.5,750 1424.5,737.2 1429.6,737.2 1429.6,739.7 1430.9,739.7 1430.9,745.3 1436,745.3 1436,759.3 1455,759.3 1455,763 1458.8,763 1458.8,767 1462.6,767 1462.6,769.5 1466.5,769.5 1466.5,772 1469.8,772 1469.8,787.3 1495.7,787.3 1495.7,785.5 1522.4,785.5 1522.4,787.3 1531.3,787.3 1531.3,785.5 1536.3,785.5 1536.3,787.3 1620.7,787.3" fill="none" stroke="#ee7b63" stroke-width="2"/>
<polyline points="1635.4,787.3 1658.3,787.3 1658.3,785.5 1673.6,785.5 1673.6,783.4 1680,783.4 1680,785.5 1733.3,785.5 1733.3,787.8 1747.3,787.8 1747.3,785.5 1752.3,785.5" fill="none" stroke="#ee7b63" stroke-width="2"/>
<polyline points="445.0,1200.6 453.6,1200.6 453.6,1192.7 457.7,1192.7 457.7,1205.9 467.0,1205.9 467.0,1196.4 471.0,1196.4 471.0,1199.4 481.0,1199.4 481.0,1200.6 495.3,1200.6 495.3,1196.4 500.8,1196.4 500.8,1200.6 509.0,1200.6 509.0,1194.4 515.0,1194.4 515.0,1202.3 529.5,1202.3 529.5,1204.4 552.8,1204.4 552.8,1202.3 559.3,1202.3 559.3,892.7 564.6,892.7 564.6,1196.4 573.5,1196.4 573.5,1145.2 580.0,1145.2 580.0,1200.9 585.0,1200.9 585.0,1202.3 598.0,1202.3 598.0,1204.4 606.7,1204.4 606.7,1202.3 615.3,1202.3 615.3,1182.2 622.5,1182.2 622.5,1204.4 628.0,1204.4 628.0,1202.3 645.5,1202.3 645.5,1204.4 657.0,1204.4 657.0,1202.3 667.0,1202.3 667.0,1204.4 673.5,1204.4 673.5,1196.4 677.0,1196.4 677.0,1202.3 687.0,1202.3 687.0,1192.2 690.0,1192.2 690.0,1204.4 700.0,1204.4 700.0,1204.4" fill="none" stroke="#fff" stroke-width="2.8" stroke-linejoin="miter" stroke-miterlimit="2"/>
<polyline points="445.0,1201.4 453.6,1201.4 453.6,1201.4 457.7,1201.4 457.7,1207.4 467.0,1207.4 467.0,1200.1 471.0,1200.1 471.0,1199.5 481.0,1199.5 481.0,1201.4 495.3,1201.4 495.3,1200.1 500.8,1200.1 500.8,1201.4 509.0,1201.4 509.0,1201.4 515.0,1201.4 515.0,1203.1 529.5,1203.1 529.5,1205.2 552.8,1205.2 552.8,1203.1 559.3,1203.1 559.3,1203.1 564.6,1203.1 564.6,1197.3 573.5,1197.3 573.5,1197.3 580.0,1197.3 580.0,1201.1 585.0,1201.1 585.0,1203.1 598.0,1203.1 598.0,1205.2 606.7,1205.2 606.7,1203.6 615.3,1203.6 615.3,1207.4 622.5,1207.4 622.5,1206.1 628.0,1206.1 628.0,1203.1 645.5,1203.1 645.5,1205.2 657.0,1205.2 657.0,1203.1 667.0,1203.1 667.0,1204.6 673.5,1204.6 673.5,1204.6 677.0,1204.6 677.0,1203.1 687.0,1203.1 687.0,1204.6 690.0,1204.6 690.0,1207.6 700.0,1207.6 700.0,1207.6" fill="none" stroke="#fff" stroke-width="2.8" stroke-linejoin="miter" stroke-miterlimit="2"/>
<polyline points="561.8,1197.0 561.8,896.5 562.3,896.5 562.3,1197.5 575.5,1197.5 575.5,1147.0 578.0,1147.0 578.0,1202.0" fill="none" stroke="#fff" stroke-width="2.2" stroke-linejoin="miter" stroke-miterlimit="2"/>
<path d="M700,1205 L700,1205 L704,1205 L704,1205 L710,1205 L710,1203 L720,1203 L720,1204 L724,1204 L724,1204 L734,1204 L734,1202 L736,1202 L736,1204 L746,1204 L746,1204 L750,1204 L750,1205 L756,1205 L756,1201 L758,1201 L758,1203 L762,1203 L762,1201 L764,1201 L764,1205 L770,1205 L770,1204 L778,1204 L778,1204 L780,1204 L780,1203 L784,1203 L784,1204 L792,1204 L792,1204 L798,1204 L798,1204 L800,1204 L800,1205 L802,1205 L802,1201 L808,1201 L808,1201 L810,1201 L810,1202 L812,1202 L812,1201 L818,1201 L818,1203 L828,1203 L828,1203 L832,1203 L832,1205 L838,1205 L838,1204 L840,1204 L840,1204 L842,1204 L842,1203 L846,1203 L846,1204 L848,1204 L848,1203 L850,1203 L850,1203 L858,1203 L858,1204 L862,1204 L862,1201 L872,1201 L872,1203 L880,1203 L880,1205 L884,1205 L884,1204 L886,1204 L886,1201 L890,1201 L890,1204 L892,1204 L892,1201 L902,1201 L902,1201 L906,1201 L906,1203 L916,1203 L916,1201 L920,1201 L920,1205 L922,1205 L922,1201 L930,1201 L930,1202 L932,1202 L932,1203 L934,1203 L934,1204 L938,1204 L938,1203 L942,1203 L942,1204 L944,1204 L944,1202 L952,1202 L952,1204 L958,1204 L958,1210 L952,1210 L952,1211 L948,1211 L948,1210 L936,1210 L936,1211 L932,1211 L932,1209 L920,1209 L920,1209 L912,1209 L912,1209 L908,1209 L908,1209 L896,1209 L896,1209 L890,1209 L890,1209 L882,1209 L882,1210 L874,1210 L874,1209 L868,1209 L868,1210 L864,1210 L864,1209 L856,1209 L856,1208 L852,1208 L852,1211 L844,1211 L844,1209 L842,1209 L842,1208 L840,1208 L840,1210 L836,1210 L836,1209 L828,1209 L828,1208 L824,1208 L824,1210 L820,1210 L820,1209 L818,1209 L818,1208 L810,1208 L810,1211 L802,1211 L802,1210 L798,1210 L798,1209 L796,1209 L796,1209 L788,1209 L788,1209 L786,1209 L786,1209 L780,1209 L780,1210 L778,1210 L778,1210 L766,1210 L766,1210 L762,1210 L762,1211 L758,1211 L758,1210 L752,1210 L752,1209 L744,1209 L744,1211 L740,1211 L740,1210 L734,1210 L734,1208 L732,1208 L732,1208 L720,1208 L720,1209 L716,1209 L716,1208 L710,1208 L710,1208 L706,1208 L706,1209 L704,1209 L704,1209 L700,1209 Z" fill="#fff"/>
<rect x="707.2" y="1195.2" width="3" height="10.8" fill="#fff"/>
<rect x="715.8" y="1196.6" width="3" height="9.4" fill="#fff"/>
<rect x="728.0" y="1193.0" width="3" height="13.0" fill="#fff"/>
<rect x="733.8" y="1195.9" width="3" height="10.1" fill="#fff"/>
<rect x="744.6" y="1193.0" width="3" height="13.0" fill="#fff"/>
<rect x="772.0" y="1195.2" width="3" height="10.8" fill="#fff"/>
<rect x="781.2" y="1197.3" width="3" height="8.7" fill="#fff"/>
<rect x="787.7" y="1193.0" width="3" height="13.0" fill="#fff"/>
<rect x="798.4" y="1200.2" width="3" height="5.8" fill="#fff"/>
<rect x="812.8" y="1195.2" width="3" height="10.8" fill="#fff"/>
<rect x="822.2" y="1190.9" width="3" height="15.1" fill="#fff"/>
<rect x="852.3" y="1195.2" width="3" height="10.8" fill="#fff"/>
<rect x="866.0" y="1199.5" width="3" height="6.5" fill="#fff"/>
<rect x="881.0" y="1193.0" width="3" height="13.0" fill="#fff"/>
<rect x="897.6" y="1191.6" width="3" height="14.4" fill="#fff"/>
<rect x="900.5" y="1195.2" width="3" height="10.8" fill="#fff"/>
<rect x="917.7" y="1195.2" width="3" height="10.8" fill="#fff"/>
<rect x="934.2" y="1197.3" width="3" height="8.7" fill="#fff"/>
<rect x="939.2" y="1195.2" width="3" height="10.8" fill="#fff"/>
<rect x="945.7" y="1195.2" width="3" height="10.8" fill="#fff"/>
<rect x="952.2" y="1197.3" width="3" height="8.7" fill="#fff"/>
<path d="M958,1203 L958,1203 L968,1203 L968,1202 L978,1202 L978,1204 L980,1204 L980,1204 L984,1204 L984,1204 L988,1204 L988,1203 L992,1203 L992,1203 L1000,1203 L1000,1204 L1004,1204 L1004,1203 L1006,1203 L1006,1204 L1012,1204 L1012,1202 L1014,1202 L1014,1205 L1016,1205 L1016,1204 L1020,1204 L1020,1204 L1022,1204 L1022,1205 L1030,1205 L1030,1203 L1034,1203 L1034,1202 L1044,1202 L1044,1202 L1046,1202 L1046,1203 L1052,1203 L1052,1203 L1060,1203 L1060,1203 L1066,1203 L1066,1203 L1074,1203 L1074,1203 L1080,1203 L1080,1203 L1086,1203 L1086,1203 L1094,1203 L1094,1202 L1100,1202 L1100,1204 L1110,1204 L1110,1205 L1112,1205 L1112,1204 L1116,1204 L1116,1204 L1126,1204 L1126,1205 L1134,1205 L1134,1203 L1136,1203 L1136,1203 L1146,1203 L1146,1203 L1152,1203 L1152,1204 L1160,1204 L1160,1204 L1162,1204 L1162,1202 L1164,1202 L1164,1204 L1166,1204 L1166,1204 L1168,1204 L1168,1204 L1172,1204 L1172,1204 L1176,1204 L1176,1202 L1180,1202 L1180,1203 L1184,1203 L1184,1203 L1190,1203 L1190,1204 L1200,1204 L1200,1203 L1206,1203 L1206,1203 L1210,1203 L1210,1204 L1212,1204 L1212,1202 L1222,1202 L1222,1204 L1230,1204 L1230,1203 L1232,1203 L1232,1203 L1238,1203 L1238,1204 L1246,1204 L1246,1204 L1248,1204 L1248,1204 L1250,1204 L1250,1202 L1252,1202 L1252,1204 L1260,1204 L1260,1202 L1264,1202 L1264,1203 L1266,1203 L1266,1202 L1274,1202 L1274,1205 L1276,1205 L1276,1204 L1278,1204 L1278,1205 L1282,1205 L1282,1203 L1284,1203 L1284,1204 L1286,1204 L1286,1203 L1290,1203 L1290,1202 L1292,1202 L1292,1204 L1296,1204 L1296,1203 L1302,1203 L1302,1204 L1310,1204 L1310,1208 L1302,1208 L1302,1210 L1294,1210 L1294,1210 L1286,1210 L1286,1210 L1280,1210 L1280,1208 L1274,1208 L1274,1209 L1270,1209 L1270,1210 L1266,1210 L1266,1210 L1260,1210 L1260,1210 L1256,1210 L1256,1210 L1248,1210 L1248,1210 L1246,1210 L1246,1210 L1240,1210 L1240,1208 L1236,1208 L1236,1208 L1232,1208 L1232,1210 L1224,1210 L1224,1211 L1220,1211 L1220,1211 L1208,1211 L1208,1211 L1196,1211 L1196,1211 L1190,1211 L1190,1210 L1178,1210 L1178,1210 L1176,1210 L1176,1210 L1164,1210 L1164,1210 L1160,1210 L1160,1208 L1156,1208 L1156,1210 L1152,1210 L1152,1208 L1146,1208 L1146,1210 L1144,1210 L1144,1210 L1138,1210 L1138,1210 L1130,1210 L1130,1209 L1128,1209 L1128,1211 L1116,1211 L1116,1211 L1112,1211 L1112,1208 L1100,1208 L1100,1209 L1096,1209 L1096,1210 L1084,1210 L1084,1211 L1080,1211 L1080,1209 L1068,1209 L1068,1208 L1066,1208 L1066,1210 L1064,1210 L1064,1211 L1056,1211 L1056,1211 L1052,1211 L1052,1210 L1046,1210 L1046,1210 L1038,1210 L1038,1209 L1036,1209 L1036,1210 L1024,1210 L1024,1211 L1020,1211 L1020,1210 L1016,1210 L1016,1210 L1014,1210 L1014,1209 L1008,1209 L1008,1208 L1004,1208 L1004,1209 L996,1209 L996,1211 L984,1211 L984,1209 L972,1209 L972,1211 L964,1211 L964,1208 L962,1208 L962,1209 L958,1209 Z" fill="#fff"/>
<rect x="960.2" y="1196.7" width="3" height="9.3" fill="#fff"/>
<rect x="971.5" y="1196.7" width="3" height="9.3" fill="#fff"/>
<rect x="981.7" y="1177.3" width="3" height="28.7" fill="#fff"/>
<rect x="994.0" y="1195.7" width="3" height="10.3" fill="#fff"/>
<rect x="1011.3" y="1200.0" width="3" height="6.0" fill="#fff"/>
<rect x="1036.0" y="1195.7" width="3" height="10.3" fill="#fff"/>
<rect x="1046.0" y="1195.7" width="3" height="10.3" fill="#fff"/>
<rect x="1060.4" y="1196.7" width="3" height="9.3" fill="#fff"/>
<rect x="1063.0" y="1196.7" width="3" height="9.3" fill="#fff"/>
<rect x="1072.6" y="1196.7" width="3" height="9.3" fill="#fff"/>
<rect x="1080.8" y="1196.0" width="3" height="10.0" fill="#fff"/>
<rect x="1083.0" y="1187.5" width="3" height="18.5" fill="#fff"/>
<rect x="1101.3" y="1200.5" width="3" height="5.5" fill="#fff"/>
<rect x="1154.4" y="1200.8" width="3" height="5.2" fill="#fff"/>
<rect x="1173.8" y="1196.7" width="3" height="9.3" fill="#fff"/>
<rect x="1195.3" y="1195.7" width="3" height="10.3" fill="#fff"/>
<rect x="1229.0" y="1187.5" width="3" height="18.5" fill="#fff"/>
<rect x="1259.7" y="1195.7" width="3" height="10.3" fill="#fff"/>
<rect x="1268.9" y="1200.0" width="3" height="6.0" fill="#fff"/>
<rect x="1281.0" y="1189.5" width="3" height="16.5" fill="#fff"/>
<rect x="1292.4" y="1201.0" width="3" height="5.0" fill="#fff"/>
<rect x="1301.6" y="1199.7" width="3" height="6.3" fill="#fff"/>
<rect x="1307.7" y="1193.6" width="3" height="12.4" fill="#fff"/>
<path d="M1426,1204 L1426,1204 L1434,1204 L1434,1204 L1436,1204 L1436,1204 L1444,1204 L1444,1203 L1446,1203 L1446,1204 L1450,1204 L1450,1202 L1460,1202 L1460,1204 L1468,1204 L1468,1203 L1474,1203 L1474,1204 L1478,1204 L1478,1203 L1482,1203 L1482,1202 L1492,1202 L1492,1204 L1494,1204 L1494,1204 L1496,1204 L1496,1203 L1500,1203 L1500,1204 L1508,1204 L1508,1204 L1518,1204 L1518,1203 L1524,1203 L1524,1204 L1532,1204 L1532,1204 L1534,1204 L1534,1203 L1540,1203 L1540,1204 L1546,1204 L1546,1202 L1548,1202 L1548,1204 L1550,1204 L1550,1202 L1554,1202 L1554,1204 L1562,1204 L1562,1202 L1564,1202 L1564,1203 L1568,1203 L1568,1203 L1574,1203 L1574,1202 L1584,1202 L1584,1202 L1592,1202 L1592,1203 L1594,1203 L1594,1203 L1602,1203 L1602,1203 L1608,1203 L1608,1202 L1614,1202 L1614,1203 L1618,1203 L1618,1203 L1626,1203 L1626,1203 L1630,1203 L1630,1203 L1632,1203 L1632,1202 L1638,1202 L1638,1204 L1642,1204 L1642,1204 L1644,1204 L1644,1202 L1652,1202 L1652,1203 L1656,1203 L1656,1204 L1658,1204 L1658,1203 L1666,1203 L1666,1203 L1670,1203 L1670,1202 L1672,1202 L1672,1202 L1674,1202 L1674,1203 L1680,1203 L1680,1204 L1688,1204 L1688,1203 L1696,1203 L1696,1204 L1706,1204 L1706,1204 L1710,1204 L1710,1204 L1712,1204 L1712,1204 L1714,1204 L1714,1203 L1718,1203 L1718,1202 L1720,1202 L1720,1203 L1728,1203 L1728,1204 L1732,1204 L1732,1204 L1738,1204 L1738,1202 L1746,1202 L1746,1203 L1750,1203 L1750,1204 L1752,1204 L1752,1202 L1753,1202 L1753,1208 L1748,1208 L1748,1210 L1744,1210 L1744,1209 L1738,1209 L1738,1210 L1736,1210 L1736,1210 L1724,1210 L1724,1210 L1720,1210 L1720,1210 L1716,1210 L1716,1209 L1714,1209 L1714,1210 L1702,1210 L1702,1208 L1694,1208 L1694,1210 L1690,1210 L1690,1209 L1688,1209 L1688,1210 L1684,1210 L1684,1208 L1682,1208 L1682,1208 L1678,1208 L1678,1210 L1674,1210 L1674,1208 L1666,1208 L1666,1209 L1664,1209 L1664,1209 L1660,1209 L1660,1209 L1656,1209 L1656,1209 L1644,1209 L1644,1209 L1640,1209 L1640,1209 L1634,1209 L1634,1208 L1626,1208 L1626,1210 L1620,1210 L1620,1209 L1608,1209 L1608,1208 L1604,1208 L1604,1210 L1602,1210 L1602,1209 L1598,1209 L1598,1208 L1586,1208 L1586,1210 L1582,1210 L1582,1210 L1574,1210 L1574,1210 L1568,1210 L1568,1208 L1562,1208 L1562,1209 L1560,1209 L1560,1209 L1548,1209 L1548,1209 L1544,1209 L1544,1210 L1540,1210 L1540,1209 L1534,1209 L1534,1210 L1530,1210 L1530,1208 L1522,1208 L1522,1210 L1518,1210 L1518,1208 L1506,1208 L1506,1209 L1494,1209 L1494,1209 L1482,1209 L1482,1210 L1480,1210 L1480,1210 L1476,1210 L1476,1210 L1472,1210 L1472,1210 L1464,1210 L1464,1210 L1452,1210 L1452,1209 L1448,1209 L1448,1208 L1444,1208 L1444,1208 L1440,1208 L1440,1208 L1436,1208 L1436,1210 L1430,1210 L1430,1209 L1426,1209 Z" fill="#fff"/>
<rect x="1452.4" y="1194.6" width="3" height="11.4" fill="#fff"/>
<rect x="1492.6" y="1192.8" width="4" height="13.2" fill="#fff"/>
<rect x="1500.9" y="1192.8" width="3" height="13.2" fill="#fff"/>
<rect x="1525.9" y="1196.5" width="3" height="9.5" fill="#fff"/>
<rect x="1537.9" y="1194.6" width="7" height="11.4" fill="#fff"/>
<rect x="1557.3" y="1196.5" width="3" height="9.5" fill="#fff"/>
<rect x="1572.1" y="1198.0" width="3" height="8.0" fill="#fff"/>
<rect x="1636.0" y="1192.8" width="3" height="13.2" fill="#fff"/>
<rect x="1641.5" y="1196.5" width="3" height="9.5" fill="#fff"/>
<rect x="1659.1" y="1178.9" width="4" height="27.1" fill="#fff"/>
<rect x="1671.2" y="1190.9" width="4" height="15.1" fill="#fff"/>
<rect x="1687.8" y="1192.8" width="3" height="13.2" fill="#fff"/>
<rect x="1694.3" y="1200.0" width="3" height="6.0" fill="#fff"/>
<rect x="1708.2" y="1190.9" width="3" height="15.1" fill="#fff"/>
<rect x="1715.6" y="1194.6" width="3" height="11.4" fill="#fff"/>
<rect x="1722.1" y="1194.6" width="3" height="11.4" fill="#fff"/>
<rect x="1748.0" y="1192.8" width="3" height="13.2" fill="#fff"/>
<polyline points="1310.0,1204.1 1317.2,1204.1 1317.2,1180.5 1319.5,1180.5 1319.5,1206.1 1325.4,1206.1 1325.4,1170.5 1327.2,1170.5 1327.2,1116.1 1330.8,1116.1 1330.8,1046.4 1333.2,1046.4 1333.2,1002.3 1336.8,1002.3 1336.8,1161.5 1340.0,1161.5 1340.0,1118.9 1341.7,1118.9 1341.7,1064.5 1345.3,1064.5 1345.3,1036.4 1347.2,1036.4 1347.2,1198.6 1351.7,1198.6 1351.7,1176.0 1353.5,1176.0 1353.5,1205.0 1358.0,1205.0 1358.0,1203.1 1364.0,1203.1 1364.0,1197.7 1366.7,1197.7 1366.7,1197.1 1370.0,1197.1 1370.0,1169.1 1373.2,1169.1 1373.2,1078.4 1377.5,1078.4 1377.5,1060.1 1379.9,1060.1 1379.9,1000.8 1384.0,1000.8 1384.0,946.1 1385.5,946.1 1385.5,824.1 1388.1,824.1 1388.1,842.1 1390.0,842.1 1390.0,1052.1 1391.5,1052.1 1391.5,1204.6 1397.0,1204.6 1397.0,1206.1 1403.0,1206.1 1403.0,1195.1 1404.6,1195.1 1404.6,1205.1 1411.0,1205.1 1411.0,1083.1 1413.8,1083.1 1413.8,966.1 1417.8,966.1 1417.8,926.6 1419.5,926.6 1419.5,877.1 1422.8,877.1 1422.8,817.6 1424.4,817.6 1424.4,1200.1 1426.0,1200.1 1426.0,1204.1" fill="none" stroke="#fff" stroke-width="2.2" stroke-linejoin="miter" stroke-miterlimit="2"/>
<polyline points="1331.4,1117.0 1332.7,1117.0 1332.7,1049.0 1334.4,1049.0 1334.4,1161.0 1341.4,1161.0 1341.4,1117.0 1343.3,1117.0 1343.3,1066.0 1345.2,1066.0 1345.2,1199.0" fill="none" stroke="#fff" stroke-width="2.2" stroke-linejoin="miter" stroke-miterlimit="2"/>
<rect x="481" y="801" width="8.2" height="432" fill="#ea4429"/>
</svg>
</body></html>
